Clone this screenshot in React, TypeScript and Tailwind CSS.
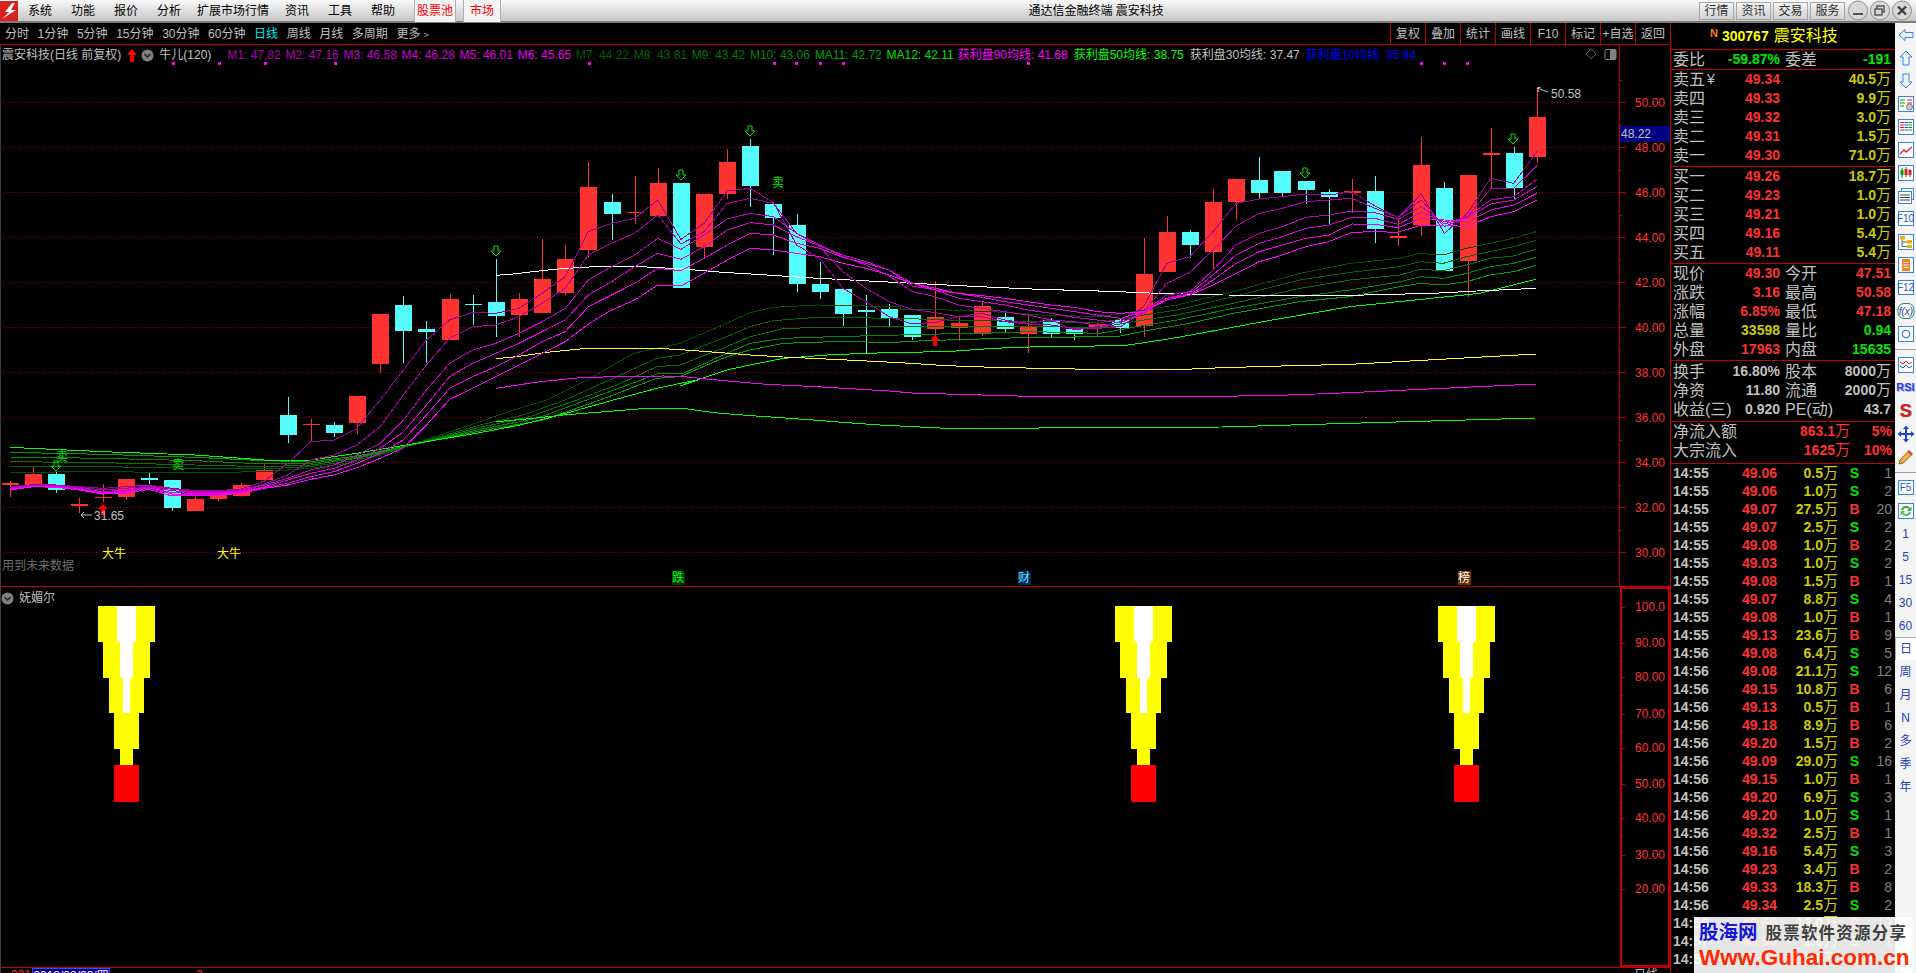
import React from 'react';

const RED = '#ff3232';
const CYAN = '#54fcfc';
const Z = (x: number) => 10 + 23.135 * x;

// wickTop, bodyTop, bodyBottom, wickBottom, colour
const candles: [number, number, number, number, 'r' | 'c'][] = [
  [481, 483, 485, 497, 'r'], [467, 474, 486, 486, 'r'], [472, 474, 490, 493, 'c'], [498, 504, 506, 513, 'r'],
  [484, 497, 498, 502, 'r'], [479, 479, 497, 500, 'r'], [473, 478, 480, 484, 'c'], [480, 480, 508, 511, 'c'],
  [497, 499, 511, 511, 'r'], [495, 495, 499, 501, 'r'], [483, 485, 496, 497, 'r'], [463, 470, 480, 482, 'r'],
  [397, 415, 435, 443, 'c'], [419, 424, 425, 441, 'r'], [422, 425, 433, 437, 'c'], [396, 396, 423, 434, 'r'],
  [314, 314, 364, 373, 'r'], [296, 305, 331, 363, 'c'], [321, 329, 332, 363, 'c'], [294, 299, 340, 340, 'r'],
  [295, 304, 305, 325, 'c'], [259, 302, 316, 337, 'c'], [293, 299, 315, 337, 'r'], [239, 279, 313, 313, 'r'],
  [245, 259, 293, 295, 'r'], [162, 187, 250, 258, 'r'], [194, 202, 214, 240, 'c'], [176, 212, 213, 224, 'r'],
  [168, 183, 216, 216, 'r'], [183, 183, 288, 288, 'c'], [194, 194, 247, 258, 'r'], [149, 162, 194, 199, 'r'],
  [139, 146, 186, 207, 'c'], [204, 204, 218, 255, 'c'], [214, 225, 284, 292, 'c'], [262, 284, 292, 299, 'c'],
  [288, 289, 314, 326, 'c'], [295, 310, 312, 353, 'c'], [304, 309, 319, 326, 'c'], [315, 315, 337, 340, 'c'],
  [281, 317, 329, 337, 'r'], [317, 323, 328, 341, 'r'], [302, 306, 334, 336, 'r'], [312, 317, 329, 332, 'c'],
  [313, 327, 334, 353, 'r'], [318, 320, 334, 337, 'c'], [329, 329, 334, 340, 'c'], [322, 324, 328, 337, 'r'],
  [319, 320, 328, 333, 'c'], [238, 274, 326, 337, 'r'], [216, 232, 272, 272, 'r'], [230, 232, 245, 258, 'c'],
  [189, 202, 252, 270, 'r'], [179, 179, 202, 220, 'r'], [157, 180, 193, 198, 'c'], [171, 171, 193, 196, 'c'],
  [181, 181, 190, 204, 'c'], [189, 192, 197, 224, 'c'], [179, 191, 193, 213, 'r'], [176, 191, 229, 243, 'c'],
  [217, 236, 238, 246, 'r'], [137, 165, 225, 236, 'r'], [182, 188, 271, 271, 'c'], [175, 175, 261, 297, 'r'],
  [128, 153, 155, 188, 'r'], [147, 153, 188, 200, 'c'], [88, 117, 157, 163, 'r'],
];

const sc = (rows: number[][], y0: number) => rows.map((r) => r.map((p) => y0 + p / 3));

// ribbon M1..M6, one row per candle
const ribbon: number[][] = [
  ...sc([
    [200, 203, 205, 207, 208, 210], [194, 195, 196, 198, 199, 200], [195, 196, 197, 199, 200, 202], [200, 202, 205, 207, 208, 210],
    [205, 210, 215, 218, 220, 222], [200, 205, 210, 214, 216, 220], [195, 197, 200, 203, 204, 208], [205, 208, 212, 218, 222, 228],
    [212, 215, 218, 220, 222, 225], [212, 215, 218, 220, 222, 225], [207, 210, 212, 215, 217, 220], [183, 192, 195, 200, 203, 205],
    [130, 165, 175, 180, 190, 195], [65, 120, 150, 160, 170, 178], [60, 105, 135, 145, 155, 165], [25, 75, 105, 120, 130, 143],
    [-60, 20, 70, 85, 100, 115],
  ], 420),
  [370, 395, 420, 432, 440, 448],
  [340, 365, 390, 405, 415, 425],
  ...sc([
    [600, 655, 730, 770, 805, 838], [577, 620, 690, 730, 770, 805], [580, 615, 670, 700, 740, 770], [565, 590, 640, 670, 705, 735],
    [520, 550, 605, 635, 665, 700], [470, 505, 565, 600, 635, 665], [335, 405, 480, 525, 560, 612], [310, 370, 440, 485, 525, 570],
    [295, 340, 405, 440, 490, 540], [240, 285, 355, 400, 445, 495], [358, 372, 388, 418, 452, 498], [310, 335, 345, 380, 415, 460],
    [213, 250, 297, 330, 375, 420], [205, 235, 280, 308, 340, 385], [248, 250, 290, 315, 345, 390], [375, 340, 340, 350, 370, 400],
    [415, 380, 375, 378, 385, 410], [505, 455, 410, 405, 412, 430], [545, 505, 435, 425, 430, 445], [590, 545, 468, 450, 450, 465],
  ], 120),
  ...sc([
    [612, 568, 515, 498, 490, 490], [607, 578, 530, 510, 505, 510], [590, 590, 555, 535, 520, 520], [580, 590, 565, 545, 532, 527],
    [600, 605, 575, 555, 545, 535], [610, 612, 585, 570, 555, 545], [600, 615, 600, 580, 565, 555], [630, 625, 605, 592, 575, 562],
    [620, 625, 615, 600, 585, 575], [605, 620, 620, 608, 595, 580], [560, 575, 575, 580, 575, 575], [430, 490, 525, 535, 535, 540],
    [410, 457, 515, 520, 525, 525], [335, 390, 450, 465, 480, 495], [250, 318, 375, 405, 430, 460], [237, 280, 340, 370, 395, 425],
    [230, 265, 320, 350, 375, 405], [222, 245, 292, 325, 355, 380], [225, 240, 285, 315, 345, 365],
  ], 120),
  ...sc([
    [185, 205, 243, 262, 282, 307], [228, 235, 248, 265, 283, 305], [263, 262, 268, 283, 293, 307], [192, 210, 230, 247, 265, 285],
  ], 130),
  ...sc([
    [700, 680, 672, 665, 660, 675], [640, 650, 650, 655, 665, 680], [535, 567, 600, 612, 630, 650], [550, 565, 590, 600, 615, 635],
    [455, 497, 538, 560, 580, 600],
  ], 0),
];
const ribbonColors = ['#a000a0', '#b000b0', '#c400c4', '#d800d8', '#ec00ec', '#ff00ff'];

const path = (a: number[][], x0: number, y0: number, sx = 3) => a.map(([x, y]) => `${x0 + x / sx},${y0 + y / 3}`).join(' ');

const greens: { c: string; p: string }[] = [
  {
    c: '#005000',
    p: [path([[30, 157], [308, 155], [585, 158], [793, 155], [932, 145], [1071, 125], [1140, 106]], 0, 420),
      path([[0, 155], [100, 120]], 480, 370),
      path([[290, 840], [430, 770], [550, 700], [690, 670], [830, 610], [900, 578], [970, 562], [1100, 555], [1350, 560]], 450, 120),
      path([[0, 567], [140, 570], [280, 575], [420, 585], [600, 590], [700, 575], [830, 555], [1000, 515], [1200, 460], [1350, 430]], 900, 120),
      path([[0, 775], [60, 760], [130, 765], [200, 745], [270, 730], [340, 715], [407, 695]], 1400, 0)].join(' '),
  },
  {
    c: '#006400',
    p: [path([[30, 140], [308, 140], [585, 145], [793, 147], [932, 140], [1071, 120], [1140, 103]], 0, 420),
      path([[0, 165], [130, 135]], 480, 370),
      path([[345, 840], [500, 770], [620, 715], [690, 705], [830, 650], [900, 620], [970, 602], [1100, 592], [1350, 595]], 450, 120),
      path([[0, 595], [140, 600], [400, 605], [600, 608], [700, 590], [830, 570], [1000, 530], [1200, 480], [1350, 457]], 900, 120),
      path([[0, 800], [60, 785], [130, 790], [200, 770], [270, 755], [340, 740], [407, 722]], 1400, 0)].join(' '),
  },
  {
    c: '#007800',
    p: [path([[30, 125], [308, 128], [585, 135], [793, 140], [932, 135], [1071, 115], [1140, 100]], 0, 420),
      path([[0, 172], [150, 140]], 480, 370),
      path([[380, 840], [500, 795], [620, 740], [690, 735], [830, 680], [900, 650], [1000, 625], [1150, 622], [1350, 620]], 450, 120),
      path([[0, 620], [200, 620], [400, 620], [600, 622], [700, 605], [830, 585], [1000, 550], [1200, 505], [1350, 480]], 900, 120),
      path([[0, 825], [60, 808], [130, 812], [200, 795], [270, 775], [340, 768], [407, 748]], 1400, 0)].join(' '),
  },
  {
    c: '#008c00',
    p: [path([[30, 111], [308, 115], [585, 122], [793, 132], [932, 130], [1071, 112], [1140, 97]], 0, 420),
      path([[0, 178], [170, 145]], 480, 370),
      path([[410, 840], [560, 785], [620, 762], [700, 760], [830, 700], [900, 670], [1000, 655], [1150, 650], [1350, 645]], 450, 120),
      path([[0, 645], [200, 640], [400, 635], [600, 640], [700, 622], [830, 600], [1000, 565], [1200, 530], [1350, 510]], 900, 120),
      path([[0, 845], [60, 830], [130, 835], [200, 820], [270, 800], [340, 790], [407, 772]], 1400, 0)].join(' '),
  },
  {
    c: '#00a000',
    p: [path([[30, 97], [308, 103], [585, 112], [793, 122], [932, 125], [1071, 108], [1140, 94]], 0, 420),
      path([[0, 183], [190, 150]], 480, 370),
      path([[450, 840], [620, 775], [690, 770], [830, 710], [900, 690], [1000, 670], [1150, 665], [1350, 667]], 450, 120),
      path([[0, 665], [140, 660], [400, 652], [650, 650], [750, 630], [870, 610], [1000, 580], [1200, 545], [1350, 530]], 900, 120),
      path([[0, 860], [60, 850], [130, 855], [200, 845], [270, 825], [340, 815], [407, 797]], 1400, 0)].join(' '),
  },
  {
    c: '#00ff00',
    p: [path([[30, 82], [308, 95], [585, 105], [793, 120], [932, 120], [1071, 100], [1140, 88]], 0, 420),
      path([[0, 188], [120, 165], [240, 135], [400, 90], [530, 55], [650, 30]], 480, 370),
      path([[690, 798], [830, 750], [900, 735], [1000, 715], [1130, 705], [1246, 700], [1350, 697]], 450, 120),
      path([[0, 697], [140, 695], [280, 685], [420, 680], [670, 677], [800, 658], [900, 640], [1100, 603], [1350, 560]], 900, 120),
      path([[240, 880], [340, 855], [407, 838]], 1400, 0)].join(' '),
  },
];

const longLines = [
  {
    c: '#00ff00',
    p: path([[48, 155], [130, 148], [250, 135], [350, 127], [500, 115], [610, 115], [700, 128], [800, 136], [900, 143], [1000, 150], [1100, 158], [1200, 165], [1300, 170], [1400, 175], [1500, 175]], 480, 370)
      + ' 1222,427 1536,418',
  },
  {
    c: '#ff00ff',
    p: [path([[138, 805], [270, 785], [400, 772], [640, 768], [700, 770], [800, 780], [950, 793], [1100, 800], [1350, 815]], 450, 120),
      path([[0, 818], [140, 822], [280, 826], [420, 830], [830, 830], [1110, 827], [1250, 822], [1350, 818]], 900, 120)].join(' ') + ' 1536,384',
  },
  {
    c: '#ffff00',
    p: [path([[138, 716], [200, 710], [290, 697], [400, 686], [640, 686], [720, 691], [800, 697], [900, 705], [1000, 711], [1150, 718], [1350, 728]], 450, 120),
      path([[0, 728], [140, 737], [280, 742], [620, 749], [830, 749], [970, 743], [1180, 737], [1350, 733]], 900, 120)].join(' ') + ' 1536,354',
  },
  {
    c: '#ffffff',
    p: [path([[138, 466], [190, 462], [250, 455], [310, 448], [400, 442], [450, 439], [590, 441], [700, 447], [820, 457], [950, 465], [1070, 473], [1200, 480], [1350, 488]], 450, 120),
      path([[0, 488], [140, 495], [280, 502], [420, 508], [630, 514], [770, 520], [970, 525], [1350, 526]], 900, 120),
      path([[100, 880], [230, 873], [407, 865]], 1400, 0)].join(' '),
  },
];

const magentaDots = [172, 218, 264, 334, 588, 773, 795, 819, 842, 1027, 1420, 1443, 1466];
const downArrows: [number, number][] = [[56, 461], [496, 246], [681, 170], [750, 126], [1305, 168], [1513, 134]];
const upArrows: [number, number][] = [[103, 504], [935, 335]];

const DownArrow = ({ x, y }: { x: number; y: number }) => (
  <polygon fill="none" stroke="#00e000" points={`${x - 2},${y} ${x + 2},${y} ${x + 2},${y + 5} ${x + 5},${y + 5} ${x},${y + 10} ${x - 5},${y + 5} ${x - 2},${y + 5}`} />
);
const UpArrow = ({ x, y }: { x: number; y: number }) => (
  <polygon fill="#ff0000" points={`${x},${y} ${x + 5},${y + 5} ${x + 2},${y + 5} ${x + 2},${y + 11} ${x - 2},${y + 11} ${x - 2},${y + 5} ${x - 5},${y + 5}`} />
);

const legend: [string, string][] = [
  ['M1: 47.82', '#aa00aa'], ['M2: 47.16', '#b800b8'], ['M3: 46.58', '#c800c8'], ['M4: 46.28', '#d400d4'], ['M5: 46.01', '#e000e0'], ['M6: 45.65', '#ee00ee'],
  ['M7: 44.22', '#005a00'], ['M8: 43.81', '#006800'], ['M9: 43.42', '#007800'], ['M10: 43.06', '#008800'], ['MA11: 42.72', '#00a000'], ['MA12: 42.11', '#00e000'],
];
const legendWide: [string, string][] = [
  ['获利盘90均线: 41.68', '#ff00ff'], ['获利盘50均线: 38.75', '#00ff00'], ['获利盘30均线: 37.47', '#c0c0c0'], ['获利盘10均线: 35.94', '#0000ff'],
];

const CircleMark = () => (
  <svg width="13" height="13" viewBox="0 0 13 13" className="shrink-0">
    <circle cx="6.5" cy="6.5" r="6" fill="#808080" />
    <path d="M3.5 5 L6.5 8 L9.5 5" fill="none" stroke="#202020" strokeWidth="1.4" />
  </svg>
);

const MainChart = () => {
  const prices = [50, 48, 46, 44, 42, 40, 38, 36, 34, 32, 30];
  const Y = (p: number) => Math.round(101.7 + (50 - p) * 22.5) + 0.5;
  return (
    <svg viewBox="0 45 1670 541" width="1670" height="541" className="block">
      {prices.map((p) => (
        <g key={p}>
          <line x1="0" x2="1619" y1={Y(p)} y2={Y(p)} stroke="#a00000" strokeDasharray="1 2" shapeRendering="crispEdges" />
          <line x1="1619" x2="1626" y1={Y(p)} y2={Y(p)} stroke="#c00000" />
          <line x1="1619" x2="1622" y1={Y(p) - 22} y2={Y(p) - 22} stroke="#c00000" />
          <text x="1635" y={Y(p) + 4.5} fontSize="12" fill={RED}>{p.toFixed(2)}</text>
        </g>
      ))}
      <line x1="1619.5" x2="1619.5" y1="45" y2="586" stroke="#c00000" />
      {magentaDots.map((x) => <rect key={x} x={x} y="62" width="3" height="3" fill="#ff00ff" />)}

      <g shapeRendering="crispEdges">
        {candles.map(([wt, bt, bb, wb, k], i) => {
          const x = Math.round(Z(i));
          const c = k === 'r' ? RED : CYAN;
          return (
            <g key={i}>
              <rect x={x} y={wt} width="1" height={wb - wt} fill={c} />
              <rect x={x - 8} y={bt} width="17" height={bb - bt} fill={c} />
            </g>
          );
        })}
        {greens.map((l, i) => <polyline key={i} points={l.p} fill="none" stroke={l.c} />)}
        {longLines.map((l, i) => <polyline key={i} points={l.p} fill="none" stroke={l.c} />)}
        {ribbonColors.map((c, m) => (
          <polyline key={c} points={ribbon.map((r, i) => `${Z(i)},${r[m]}`).join(' ')} fill="none" stroke={c} />
        ))}
      </g>

      {downArrows.map(([x, y]) => <DownArrow key={x} x={x} y={y} />)}
      {upArrows.map(([x, y]) => <UpArrow key={x} x={x} y={y} />)}
      <text x="56" y="461" fontSize="12" fill="#00e000">卖</text>
      <text x="172" y="469" fontSize="12" fill="#00e000">卖</text>
      <text x="772" y="187" fontSize="12" fill="#00e000">卖</text>

      <line x1="1537" x2="1548" y1="88" y2="92" stroke="#c0c0c0" />
      <polyline points="1541,87 1537,88 1539,92" fill="none" stroke="#c0c0c0" />
      <text x="1551" y="98" fontSize="12" fill="#c0c0c0">50.58</text>
      <line x1="81" x2="92" y1="515" y2="515" stroke="#c0c0c0" />
      <polyline points="84,512 81,515 84,518" fill="none" stroke="#c0c0c0" />
      <text x="94" y="520" fontSize="12" fill="#c0c0c0">31.65</text>

      <text x="102" y="558" fontSize="12" fill="#ffff00">大牛</text>
      <text x="217" y="558" fontSize="12" fill="#ffff00">大牛</text>
      <text x="2" y="570" fontSize="12" fill="#707070">用到未来数据</text>

      <rect x="672" y="571" width="13" height="14" fill="#003c00" />
      <text x="672" y="582" fontSize="12" fill="#00ff00">跌</text>
      <rect x="1018" y="571" width="13" height="14" fill="#00285a" />
      <text x="1018" y="582" fontSize="12" fill="#70e0ff">财</text>
      <rect x="1458" y="571" width="13" height="14" fill="#703000" />
      <text x="1458" y="582" fontSize="12" fill="#ffffff">榜</text>

      <polygon points="1591,49 1596,54 1591,59 1586,54" fill="none" stroke="#606060" />
      <rect x="1605" y="49.5" width="11" height="10" rx="1" fill="#000000" stroke="#808080" />
      <rect x="1610" y="50" width="6" height="9" fill="#808080" />

      <rect x="1620" y="126" width="50" height="16" fill="#000080" />
      <text x="1621" y="138" fontSize="12" fill="#c0c0c0">48.22</text>
    </svg>
  );
};

const Rocket = ({ cx }: { cx: number }) => {
  const tiers = [
    { y: 606, h: 36, w: 57, white: 19 },
    { y: 642, h: 36, w: 47, white: 13 },
    { y: 678, h: 35, w: 35, white: 7 },
    { y: 713, h: 36, w: 25, white: 0 },
    { y: 749, h: 16, w: 13, white: 0 },
  ];
  return (
    <g shapeRendering="crispEdges">
      {tiers.map((t) => (
        <g key={t.y}>
          <rect x={cx - t.w / 2} y={t.y} width={t.w} height={t.h} fill="#ffff00" />
          {t.white > 0 && <rect x={cx - t.white / 2} y={t.y} width={t.white} height={t.h} fill="#ffffff" />}
        </g>
      ))}
      <rect x={cx - 12.5} y="765" width="25" height="37" fill="#ff0000" />
    </g>
  );
};

const LowerChart = () => {
  const ticks: [string, number][] = [['100.0', 607], ['90.00', 643], ['80.00', 677], ['70.00', 714], ['60.00', 748], ['50.00', 784], ['40.00', 818], ['30.00', 855], ['20.00', 889]];
  return (
    <svg viewBox="0 587 1670 380" width="1670" height="380" className="block">
      <Rocket cx={126.5} />
      <Rocket cx={1143.5} />
      <Rocket cx={1466.5} />
      <rect x="1621" y="588" width="48" height="378" fill="none" stroke="#c00000" strokeWidth="2" />
      {ticks.map(([t, y]) => (
        <g key={t}>
          <line x1="1621" x2="1625" y1={y + 0.5} y2={y + 0.5} stroke="#c00000" />
          <line x1="1621" x2="1623" y1={y + 18.5} y2={y + 18.5} stroke="#c00000" />
          <text x="1635" y={y + 3.5} fontSize="12" fill={RED}>{t}</text>
        </g>
      ))}
    </svg>
  );
};

const sells: [string, string, string][] = [['卖五', '49.34', '40.5'], ['卖四', '49.33', '9.9'], ['卖三', '49.32', '3.0'], ['卖二', '49.31', '1.5'], ['卖一', '49.30', '71.0']];
const buys: [string, string, string][] = [['买一', '49.26', '18.7'], ['买二', '49.23', '1.0'], ['买三', '49.21', '1.0'], ['买四', '49.16', '5.4'], ['买五', '49.11', '5.4']];
const stats: [string, string, string, string, string, string][] = [
  ['现价', '49.30', RED, '今开', '47.51', RED],
  ['涨跌', '3.16', RED, '最高', '50.58', RED],
  ['涨幅', '6.85%', RED, '最低', '47.18', RED],
  ['总量', '33598', '#cccc00', '量比', '0.94', '#00e600'],
  ['外盘', '17963', RED, '内盘', '15635', '#00e600'],
];
const ticksList: [string, string, string, string, string][] = [
  ['14:55', '49.06', '0.5', 'S', '1'], ['14:55', '49.06', '1.0', 'S', '2'], ['14:55', '49.07', '27.5', 'B', '20'], ['14:55', '49.07', '2.5', 'S', '2'],
  ['14:55', '49.08', '1.0', 'B', '2'], ['14:55', '49.03', '1.0', 'S', '2'], ['14:55', '49.08', '1.5', 'B', '1'], ['14:55', '49.07', '8.8', 'S', '4'],
  ['14:55', '49.08', '1.0', 'B', '1'], ['14:55', '49.13', '23.6', 'B', '9'], ['14:56', '49.08', '6.4', 'S', '5'], ['14:56', '49.08', '21.1', 'S', '12'],
  ['14:56', '49.15', '10.8', 'B', '6'], ['14:56', '49.13', '0.5', 'B', '1'], ['14:56', '49.18', '8.9', 'B', '6'], ['14:56', '49.20', '1.5', 'B', '2'],
  ['14:56', '49.09', '29.0', 'S', '16'], ['14:56', '49.15', '1.0', 'B', '1'], ['14:56', '49.20', '6.9', 'S', '3'], ['14:56', '49.20', '1.0', 'S', '1'],
  ['14:56', '49.32', '2.5', 'B', '1'], ['14:56', '49.16', '5.4', 'S', '3'], ['14:56', '49.23', '3.4', 'B', '2'], ['14:56', '49.33', '18.3', 'B', '8'],
  ['14:56', '49.34', '2.5', 'S', '2'], ['14:56', '49.50', '13.0', 'B', '13'], ['14:57', '49.50', '1.0', 'S', '1'], ['14:57', '49.50', '3.0', 'S', '2'],
];

const Quote = ({ label, price, vol, mark }: { label: string; price: string; vol: string; mark?: boolean }) => (
  <div className="flex h-[19px] items-center">
    <span className="w-[36px] pl-[2px] text-[16px] leading-[19px] text-[#c0c0c0] shrink-0">{label}</span>
    <span className="w-[73px] shrink-0 flex justify-between text-[14px]">
      <span className="text-[#c0c0c0] font-normal">{mark ? '¥' : ''}</span>
      <span className="font-bold text-[#ff3232]">{price}</span>
    </span>
    <span className="flex-1 text-right pr-[4px] text-[14px] font-bold text-[#cccc00]">
      {vol}<span className="font-normal text-[15px]">万</span>
    </span>
  </div>
);

const RightPanel = () => (
  <div className="w-[225px] shrink-0 flex flex-col border-l border-[#c00000] overflow-hidden bg-black">
    <div className="h-[27px] shrink-0 border-b border-[#c00000] flex items-center pl-[39px] gap-[4px]">
      <span className="text-[11px] font-bold text-[#ff8000] -mt-[6px]">N</span>
      <span className="text-[14px] font-bold text-[#ffff00]">300767</span>
      <span className="text-[16px] ml-[1px] text-[#ffff00]">震安科技</span>
    </div>
    <div className="h-[20px] shrink-0 border-b border-[#c00000] flex items-center">
      <span className="w-[36px] pl-[2px] text-[16px] text-[#c0c0c0]">委比</span>
      <span className="w-[73px] text-right text-[14px] font-bold text-[#00e600]">-59.87%</span>
      <span className="ml-[5px] text-[16px] text-[#c0c0c0]">委差</span>
      <span className="flex-1 text-right pr-[4px] text-[14px] font-bold text-[#00e600]">-191</span>
    </div>
    <div className="h-[97px] shrink-0 border-b border-[#c00000]">
      {sells.map((r, i) => <Quote key={r[0]} label={r[0]} price={r[1]} vol={r[2]} mark={i === 0} />)}
    </div>
    <div className="h-[97px] shrink-0 border-b border-[#c00000]">
      {buys.map((r) => <Quote key={r[0]} label={r[0]} price={r[1]} vol={r[2]} />)}
    </div>
    <div className="h-[97px] shrink-0 border-b border-[#c00000]">
      {stats.map((r) => (
        <div key={r[0]} className="flex h-[19px] items-center">
          <span className="w-[36px] pl-[2px] text-[16px] text-[#c0c0c0]">{r[0]}</span>
          <span className="w-[73px] text-right text-[14px] font-bold" style={{ color: r[2] }}>{r[1]}</span>
          <span className="ml-[5px] text-[16px] text-[#c0c0c0]">{r[3]}</span>
          <span className="flex-1 text-right pr-[4px] text-[14px] font-bold" style={{ color: r[5] }}>{r[4]}</span>
        </div>
      ))}
    </div>
    <div className="h-[61px] shrink-0 border-b border-[#c00000] pt-[1px] text-[#c0c0c0]">
      {[['换手', '16.80%', '股本', '8000'], ['净资', '11.80', '流通', '2000'], ['收益(三)', '0.920', 'PE(动)', '43.7']].map((r, i) => (
        <div key={r[0]} className="flex h-[19px] items-center">
          <span className="w-[50px] pl-[2px] text-[16px] shrink-0 whitespace-nowrap">{r[0]}</span>
          <span className="w-[59px] text-right text-[14px] font-bold">{r[1]}</span>
          <span className="ml-[5px] text-[16px] whitespace-nowrap">{r[2]}</span>
          <span className="flex-1 text-right pr-[4px] text-[14px] font-bold">
            {r[3]}{i < 2 && <span className="font-normal text-[15px]">万</span>}
          </span>
        </div>
      ))}
    </div>
    <div className="h-[42px] shrink-0 border-b border-[#c00000]">
      {[['净流入额', '863.1', '5%'], ['大宗流入', '1625', '10%']].map((r) => (
        <div key={r[0]} className="flex h-[19px] items-center">
          <span className="w-[80px] pl-[2px] text-[16px] text-[#c0c0c0]">{r[0]}</span>
          <span className="w-[99px] text-right text-[14px] font-bold text-[#ff3232]">
            {r[1]}<span className="font-normal text-[15px]">万</span>
          </span>
          <span className="flex-1 text-right pr-[3px] text-[14px] font-bold text-[#ff3232]">{r[2]}</span>
        </div>
      ))}
    </div>
    {ticksList.map((r, i) => (
      <div key={i} className="flex h-[18px] shrink-0 items-center text-[14px]">
        <span className="w-[38px] pl-[2px] font-bold text-[#c0c0c0]">{r[0]}</span>
        <span className="w-[68px] text-right font-bold text-[#ff3232]">{r[1]}</span>
        <span className="w-[61px] text-right font-bold text-[#cccc00]">
          {r[2]}<span className="font-normal text-[15px]">万</span>
        </span>
        <span className={`w-[33px] text-center font-bold ${r[3] === 'B' ? 'text-[#ff3232]' : 'text-[#00e600]'}`}>{r[3]}</span>
        <span className="w-[21px] text-right text-[#808080]">{r[4]}</span>
      </div>
    ))}
  </div>
);

const SideBox = ({ children }: { children: React.ReactNode }) => (
  <span className="w-[16px] h-[15px] border border-[#3c82e6] bg-white flex items-center justify-center text-[10px] leading-none font-normal text-[#1e5ac8]">
    {children}
  </span>
);

const Ico = ({ children }: { children: React.ReactNode }) => (
  <svg width="18" height="18" viewBox="0 0 18 18" className="block">{children}</svg>
);

const Frame = () => <rect x="1.5" y="1.5" width="15" height="15" fill="#ffffff" stroke="#3c82e6" />;

const sideIcons: React.ReactNode[] = [
  <Ico><path d="M2 9 L8 3.5 V6.5 H16 V11.5 H8 V14.5 Z" fill="#eef4ff" stroke="#3c82e6" /></Ico>,
  <Ico><path d="M9 2 L15 8 H12 V16 H6 V8 H3 Z" fill="#eef4ff" stroke="#3c82e6" /></Ico>,
  <Ico><path d="M9 16 L15 10 H12 V2 H6 V10 H3 Z" fill="#eef4ff" stroke="#3c82e6" /></Ico>,
  <Ico><Frame /><path d="M3 5H8M3 8H8M3 11H7" stroke="#00a000" /><path d="M10 5H15M10 8H15" stroke="#e02020" /><circle cx="12.5" cy="12" r="3" fill="#c8c8c8" stroke="#808080" /></Ico>,
  <Ico><Frame /><path d="M3 4.5H7M3 7H7M3 9.5H7M3 12H7" stroke="#e02020" strokeWidth="1.2" /><path d="M7.5 4.5H11M7.5 7H11M7.5 9.5H11M7.5 12H11" stroke="#1e5ac8" strokeWidth="1.2" /><path d="M11.5 4.5H15M11.5 7H15M11.5 9.5H15M11.5 12H15" stroke="#00a000" strokeWidth="1.2" /></Ico>,
  <Ico><Frame /><path d="M3 13 L7 9 L9 11 L15 6" fill="none" stroke="#e02020" strokeWidth="1.3" /></Ico>,
  <Ico><Frame /><path d="M5 4V14M9 3V13M13 5V13" stroke="#008000" /><rect x="3.5" y="6" width="3" height="5" fill="#00a000" /><rect x="7.5" y="5" width="3" height="6" fill="#e02020" /><rect x="11.5" y="6" width="3" height="5" fill="#e02020" /></Ico>,
  <Ico><rect x="4.5" y="1.5" width="12" height="11" fill="#ffffff" stroke="#3c82e6" /><rect x="1.5" y="4.5" width="13" height="12" fill="#ffffff" stroke="#3c82e6" /><path d="M3 8H13M3 10.5H13M3 13H13" stroke="#404040" /></Ico>,
  <SideBox>F10</SideBox>,
  <Ico><Frame /><rect x="3" y="3" width="5" height="3.5" fill="#f0b000" /><rect x="10" y="7" width="5" height="3.5" fill="#f0b000" /><rect x="10" y="12" width="5" height="3" fill="#f0b000" /><path d="M5 6.5V13.5H10M5 9H10" fill="none" stroke="#606060" /></Ico>,
  <Ico><Frame /><rect x="5" y="3" width="8" height="12" fill="#f08020" /><path d="M6.5 6.5H11.5M6.5 9H11.5M6.5 11.5H11.5" stroke="#ffffff" /></Ico>,
  <SideBox>F12</SideBox>,
  <Ico><rect x="1" y="1.5" width="16" height="15" rx="6" fill="#ffffff" stroke="#109070" /><text x="9" y="13" textAnchor="middle" fontSize="10" fontStyle="italic" fill="#1e3ca0">f(x)</text></Ico>,
  <Ico><Frame /><circle cx="9" cy="9" r="3.8" fill="none" stroke="#1e5ac8" /></Ico>,
  null,
  <Ico><Frame /><path d="M3 6 L6 8 L9 5 L12 8 L15 6" fill="none" stroke="#e02020" /><path d="M3 10 L6 12 L9 9 L12 12 L15 10" fill="none" stroke="#1e5ac8" /></Ico>,
  <span className="text-[11px] font-bold text-[#1e3ce0] [text-shadow:1px_1px_0_#b0b0ff]">RSI</span>,
  <span className="text-[18px] leading-none font-bold text-[#d02020] [text-shadow:1px_0_0_#808080]">S</span>,
  <Ico><path d="M9 0.5 L12 4 H10 V8 H14 V6 L17.5 9 L14 12 V10 H10 V14 H12 L9 17.5 L6 14 H8 V10 H4 V12 L0.5 9 L4 6 V8 H8 V4 H6 Z" fill="#1e46c8" /></Ico>,
  <Ico><path d="M2 16 L3 12 L12 2.5 L15.5 6 L6 15 Z" fill="#f0b050" stroke="#906020" /><path d="M12 2.5 L15.5 6 L14 7.5 L10.5 4 Z" fill="#e04040" /></Ico>,
  null,
  <SideBox>F5</SideBox>,
  <Ico><Frame /><path d="M4 8 A5 5 0 0 1 13 6 L14.5 4.5 V9 H10 L11.5 7.5 A3 3 0 0 0 6 8.5 Z" fill="#40b040" /><path d="M14 10 A5 5 0 0 1 5 12 L3.5 13.5 V9 H8 L6.5 10.5 A3 3 0 0 0 12 9.5 Z" fill="#60c060" /></Ico>,
  '1', '5', '15', '30', '60', '日', '周', '月', 'N', '多', '季', '年',
];

const SideBar = () => (
  <div className="w-[21px] shrink-0 bg-[#f4f4f4] flex flex-col items-center text-[#1e46b4] text-[12px]">
    {sideIcons.map((it, i) => {
      if (it === null) return <div key={i} className="h-[8px] w-full flex items-center"><div className="h-px w-full bg-[#a0a0a0]" /></div>;
      const selected = it === '日';
      return (
        <div key={i} className={`h-[23px] w-full shrink-0 flex items-center justify-center ${selected ? 'border-l border-t border-[#b0b0b0] bg-white' : ''}`}>
          {it}
        </div>
      );
    })}
  </div>
);

const MenuBar = () => (
  <div className="h-[23px] shrink-0 flex items-center border-b-2 border-[#7c7c7c] bg-gradient-to-b from-[#fafafa] to-[#c6c6c6] text-[12px] text-black">
    <svg width="18" height="20" viewBox="0 0 18 20" className="shrink-0">
      <rect width="18" height="20" fill="#d82020" />
      <path d="M12 2 L5 11 H9 L2 18 L16 9 H11 L15 2 Z" fill="#f4f4f4" />
    </svg>
    <div className="flex items-center gap-[19px] ml-[10px]">
      <span>系统</span>
      <span>功能</span>
      <span>报价</span>
      <span>分析</span>
      <span className="-ml-[3px]">扩展市场行情</span>
      <span className="-ml-[3px]">资讯</span>
      <span>工具</span>
      <span>帮助</span>
    </div>
    <span className="ml-[19px] h-[22px] w-[42px] flex items-center justify-center bg-[#f4f4f4] border-x border-[#b0b0b0] text-[#ff0000]">股票池</span>
    <span className="ml-[7px] h-[22px] w-[38px] flex items-center justify-center bg-[#f4f4f4] border-x border-[#b0b0b0] text-[#ff0000]">市场</span>
    <div className="flex-1 text-center pr-[8px]">通达信金融终端 震安科技</div>
    <div className="flex items-center gap-[2px] pr-[2px]">
      {['行情', '资讯', '交易', '服务'].map((t) => (
        <span key={t} className="w-[35px] h-[18px] flex items-center justify-center border border-[#a8a8a8] bg-gradient-to-b from-[#f4f4f4] to-[#d0d0d0] text-[#303030]">{t}</span>
      ))}
      <svg width="66" height="21" viewBox="0 0 66 21" className="ml-[1px] shrink-0">
        {[10, 32, 54].map((cx) => <circle key={cx} cx={cx} cy="10.5" r="9.5" fill="#d8d8d8" stroke="#909090" />)}
        <rect x="5" y="13" width="10" height="2" fill="#505050" />
        <rect x="29" y="6" width="7" height="6" fill="none" stroke="#505050" strokeWidth="1.4" />
        <rect x="27" y="9" width="7" height="6" fill="#d8d8d8" stroke="#505050" strokeWidth="1.4" />
        <path d="M50 6.5 L58 14.5 M58 6.5 L50 14.5" stroke="#404040" strokeWidth="2.4" />
      </svg>
    </div>
  </div>
);

const ToolBar = () => (
  <div className="h-[22px] shrink-0 flex items-center border-b border-[#c00000] text-[12px] text-[#c0c0c0]">
    <div className="flex items-center gap-[8.6px] pl-[5px]">
      <span>分时</span>
      <span>1分钟</span>
      <span>5分钟</span>
      <span>15分钟</span>
      <span>30分钟</span>
      <span>60分钟</span>
      <span className="text-[#00e8e8]">日线</span>
      <span>周线</span>
      <span>月线</span>
      <span>多周期</span>
      <span>更多﹥</span>
    </div>
    <div className="ml-auto flex h-full">
      {['复权', '叠加', '统计', '画线', 'F10', '标记', '+自选', '返回'].map((t) => (
        <span key={t} className="w-[35px] h-full flex items-center justify-center border-l border-[#c00000] whitespace-nowrap">{t}</span>
      ))}
    </div>
  </div>
);

const ChartPane = () => (
  <div className="relative h-[542px] shrink-0 border-b border-[#c00000]">
    <MainChart />
    <div className="absolute top-0 left-[2px] h-[20px] flex items-center text-[12px] whitespace-nowrap">
      <span className="text-[#c0c0c0]">震安科技(日线 前复权)</span>
      <svg width="10" height="13" viewBox="0 0 10 13" className="ml-[6px] shrink-0">
        <path d="M5 0 L10 6 H7 V13 H3 V6 H0 Z" fill="#ff0000" />
      </svg>
      <span className="ml-[4px] flex"><CircleMark /></span>
      <span className="ml-[5px] text-[#c0c0c0]">牛儿(120)</span>
      <div className="ml-[16px] flex gap-[4.7px]">
        {legend.map(([t, c]) => <span key={t} style={{ color: c }}>{t}</span>)}
      </div>
      <div className="ml-[4px] flex gap-[6px]">
        {legendWide.map(([t, c]) => <span key={t} style={{ color: c }}>{t}</span>)}
      </div>
    </div>
  </div>
);

const LowerPane = () => (
  <div className="relative h-[380px] shrink-0">
    <LowerChart />
    <div className="absolute top-[2px] left-[1px] flex items-center gap-[5px] text-[12px] text-[#c0c0c0]">
      <CircleMark />
      <span>妩媚尔</span>
    </div>
  </div>
);

const DateStrip = () => (
  <div className="h-[6px] shrink-0 relative overflow-hidden border-t border-[#c00000] text-[12px] leading-[14px]">
    <span className="absolute left-[11px] top-0 text-[#ff3232]">001</span>
    <span className="absolute left-[32px] top-0 w-[78px] h-[14px] bg-[#000080] border border-[#4040ff] text-white text-center">2018/08/23/四</span>
    <span className="absolute left-[196px] top-0 text-[#ff3232]">2</span>
    <span className="absolute left-[1634px] top-0 text-[#c0c0c0]">日线</span>
  </div>
);

const Watermark = () => (
  <div className="absolute left-[1694px] top-[917px] w-[219px] h-[56px] bg-white/90 pl-[5px] pt-[4px]">
    <div className="flex items-center h-[24px]">
      <span className="text-[19.5px] font-bold text-[#1414e0] leading-none">股海网</span>
      <span className="ml-[8px] text-[16.5px] font-bold text-[#404040] leading-none tracking-[1.2px]">股票软件资源分享</span>
    </div>
    <div className="text-[22.5px] leading-[25px] font-bold text-[#ff2a00] whitespace-nowrap">Www.Guhai.com.cn</div>
  </div>
);

const App: React.FC = () => (
  <div className="relative w-[1916px] h-[973px] overflow-hidden bg-black flex flex-col font-['Liberation_Sans','Noto_Sans_CJK_SC',sans-serif]">
    <MenuBar />
    <div className="relative flex flex-1 min-h-0">
      <div className="w-[1670px] shrink-0 flex flex-col">
        <ToolBar />
        <ChartPane />
        <LowerPane />
        <DateStrip />
      </div>
      <div className="absolute left-0 top-[22px] bottom-0 w-px bg-[#3c3c3c]" />
      <RightPanel />
      <SideBar />
    </div>
    <Watermark />
  </div>
);

export default App;
